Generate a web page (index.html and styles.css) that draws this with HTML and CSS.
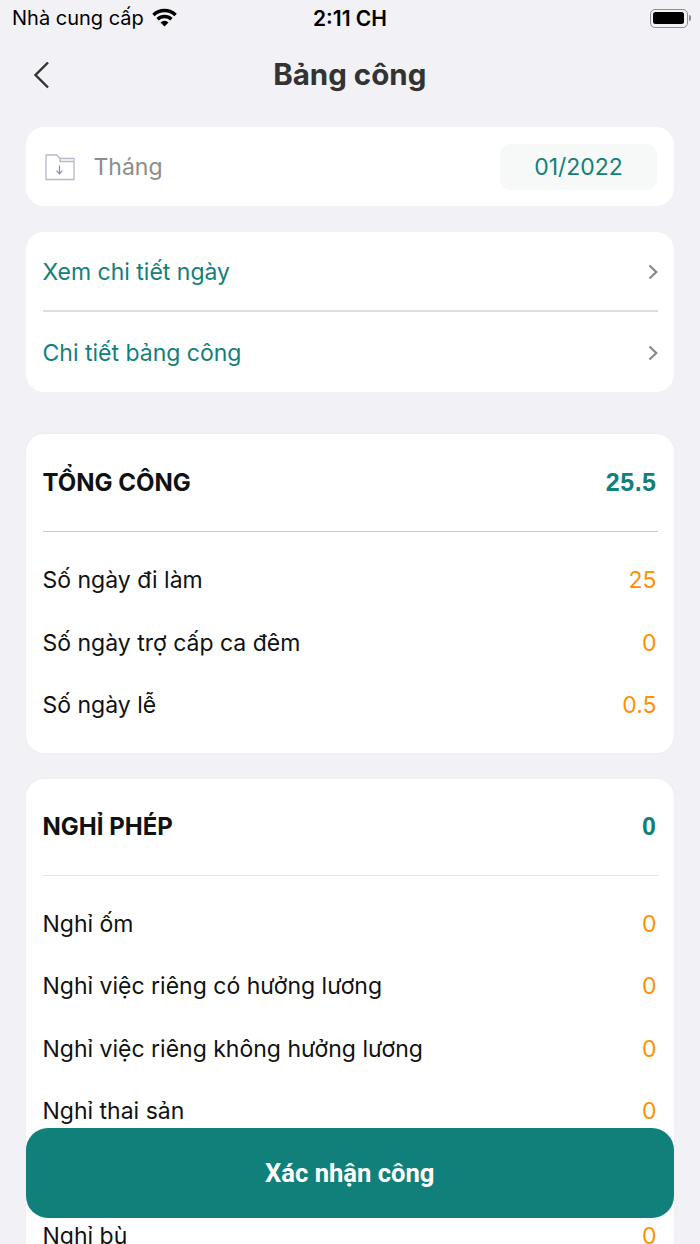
FILE: index.html
```html
<!DOCTYPE html>
<html lang="vi">
<head>
<meta charset="utf-8">
<title>Bảng công</title>
<link rel="stylesheet" href="styles.css">
</head>
<body>
<div class="screen">
  <div class="status">
    <div class="status-left">
      <span class="carrier">Nhà cung cấp</span>
      <svg class="wifi" width="25" height="19" viewBox="0 0 25 19"><path d="M1.400 7A16 16 0 0 1 23.600 7" fill="none" stroke="#000" stroke-width="3.400"/><path d="M5.550 11.310A10 10 0 0 1 19.450 11.310" fill="none" stroke="#000" stroke-width="3.400"/><path d="M12.500 18.500 8.500 14.500A5.660 5.660 0 0 1 16.500 14.500z" fill="#000"/></svg>
    </div>
    <span class="time">2:11 CH</span>
    <div class="battery"><span class="battery-body"><span class="battery-fill"></span></span><span class="battery-cap"></span></div>
  </div>

  <header class="nav">
    <svg class="back" width="20" height="30" viewBox="0 0 20 30"><path d="M16 2.500 3.500 15 16 27.500" fill="none" stroke="#333" stroke-width="2.400"/></svg>
    <h1>Bảng công</h1>
  </header>

  <section class="card month">
    <svg class="folder" width="30" height="28" viewBox="0 0 30 28"><path d="M1 2h11l3 3.500h14V26.500H1z" fill="none" stroke="#b4bac9" stroke-width="1.300"/><path d="M15 5.500V8.500H29" fill="none" stroke="#b4bac9" stroke-width="1.300"/><path d="M14.500 12.500v8M11.500 17.700l3 3.200 3-3.200" fill="none" stroke="#8a90a0" stroke-width="1.200"/></svg>
    <span class="month-label">Tháng</span>
    <span class="month-value">01/2022</span>
  </section>

  <section class="card links">
    <div class="link-row"><span>Xem chi tiết ngày</span><svg width="10" height="16" viewBox="0 0 10 16"><path d="M1.500 1.500 8.300 8l-6.800 6.500" fill="none" stroke="#888" stroke-width="2.200"/></svg></div>
    <div class="link-row"><span>Chi tiết bảng công</span><svg width="10" height="16" viewBox="0 0 10 16"><path d="M1.500 1.500 8.300 8l-6.800 6.500" fill="none" stroke="#888" stroke-width="2.200"/></svg></div>
  </section>

  <section class="card stats">
    <div class="stats-head total"><span>TỔNG CÔNG</span><strong>25.5</strong></div>
    <div class="stat"><span>Số ngày đi làm</span><b>25</b></div>
    <div class="stat"><span>Số ngày trợ cấp ca đêm</span><b>0</b></div>
    <div class="stat"><span>Số ngày lễ</span><b>0.5</b></div>
  </section>

  <section class="card stats">
    <div class="stats-head light"><span>NGHỈ PHÉP</span><strong>0</strong></div>
    <div class="stat"><span>Nghỉ ốm</span><b>0</b></div>
    <div class="stat"><span>Nghỉ việc riêng có hưởng lương</span><b>0</b></div>
    <div class="stat"><span>Nghỉ việc riêng không hưởng lương</span><b>0</b></div>
    <div class="stat"><span>Nghỉ thai sản</span><b>0</b></div>
    <div class="stat"><span>Nghỉ lễ</span><b>0</b></div>
    <div class="stat"><span>Nghỉ bù</span><b>0</b></div>
  </section>

  <button class="confirm">Xác nhận công</button>
</div>
</body>
</html>
```
FILE: styles.css
```css
* { box-sizing: border-box; }
html, body { margin: 0; padding: 0; }
body { font-family: Inter, "Noto Sans", sans-serif; background: #f1f1f6; }
.screen { position: relative; width: 700px; height: 1244px; overflow: hidden; background: #f1f1f6; padding: 0 26px 0 25.500px; }

.status { position: relative; display: flex; align-items: center; justify-content: space-between; height: 36px; margin: 0 -16.500px 0 -13.500px; color: #000; }
.status-left { display: flex; align-items: center; gap: 8px; }
.carrier { font-size: 20px; }
.wifi { margin-top: -1px; }
.time { position: absolute; left: 0; right: 2.500px; text-align: center; font-size: 21px; font-weight: 600; }
.battery { display: flex; align-items: center; gap: 1px; }
.battery-body { display: block; width: 38px; height: 19px; padding: 2.500px; border: 1.500px solid #8e8e8e; border-radius: 5px; }
.battery-fill { display: block; height: 100%; background: #000; border-radius: 2.500px; }
.battery-cap { display: block; width: 2px; height: 6px; background: #8e8e8e; border-radius: 0 2px 2px 0; }

.nav { position: relative; display: flex; align-items: center; justify-content: center; height: 75px; margin-bottom: 16px; }
.nav h1 { margin: 0; font-size: 29.500px; font-weight: 700; color: #333; }
.back { position: absolute; left: 6px; top: 24px; }

.card { background: #fff; border-radius: 18px; margin-bottom: 26px; }
.month { display: flex; align-items: center; height: 79px; padding: 0 17px 0 19px; }
.folder { flex: none; }
.month-label { margin-left: 19px; font-size: 23px; color: #8c8c8c; flex: 1; }
.month-value { display: block; width: 157px; height: 46px; line-height: 46px; text-align: center; background: #f7f8f8; border-radius: 10px; font-size: 23px; color: #12807a; }

.links { padding: 0 16px 0 17px; margin-bottom: 42px; }
.link-row { display: flex; align-items: center; justify-content: space-between; height: 80px; padding-top: 1px; font-size: 23px; color: #12807a; }
.link-row:first-child { border-bottom: 2px solid #dedede; }

.stats { padding: 0 16px 16px 17px; box-shadow: 0 0 3px rgba(0,0,0,.04); }
.stats-head { display: flex; align-items: center; justify-content: space-between; height: 97px; padding-right: 1.500px; border-bottom: 1px solid #c9c9c9; margin-bottom: 17px; font-size: 24px; font-weight: 700; color: #111; }
.stats-head.total { height: 98px; }
.stats-head.light { border-bottom-color: #e2e2e2; }
.stats-head strong { color: #12807a; font-family: "Liberation Sans", sans-serif; font-size: 25px; font-weight: 700; letter-spacing: .5px; }
.stat { display: flex; align-items: center; justify-content: space-between; height: 62.500px; padding-right: 1.500px; font-size: 23px; color: #111; }
.stat b { font-weight: 400; color: #ff9000; }

.confirm { position: absolute; left: 25.500px; right: 26px; top: 1128px; height: 90px; border: 0; border-radius: 22px; background: #12807a; color: #fff; font-family: Roboto, sans-serif; font-weight: 700; font-size: 25.600px; }
```
